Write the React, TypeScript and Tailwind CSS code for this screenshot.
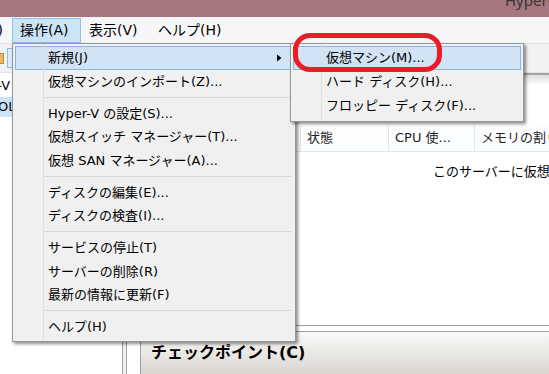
import React from "react";

const FONT = "font-['DejaVu_Sans','Noto_Sans_CJK_JP',sans-serif]";

type Item = { t: string; hl?: boolean; sub?: boolean } | "sep";

const mainItems: Item[] = [
  { t: "新規(J)", hl: true, sub: true },
  { t: "仮想マシンのインポート(Z)..." },
  "sep",
  { t: "Hyper-V の設定(S)..." },
  { t: "仮想スイッチ マネージャー(T)..." },
  { t: "仮想 SAN マネージャー(A)..." },
  "sep",
  { t: "ディスクの編集(E)..." },
  { t: "ディスクの検査(I)..." },
  "sep",
  { t: "サービスの停止(T)" },
  { t: "サーバーの削除(R)" },
  { t: "最新の情報に更新(F)" },
  "sep",
  { t: "ヘルプ(H)" },
];

const subItems = [
  { t: "仮想マシン(M)...", hl: true },
  { t: "ハード ディスク(H)..." },
  { t: "フロッピー ディスク(F)..." },
];

function Arrow() {
  return (
    <svg width="5" height="8" viewBox="0 0 5 8" className="ml-auto mr-[10px]">
      <path d="M0 0.5 L4.5 4 L0 7.5 Z" fill="#000" />
    </svg>
  );
}

export default function App() {
  return (
    <div className={`relative w-[549px] h-[374px] overflow-hidden bg-white text-[13px] text-black ${FONT}`}>
      {/* title bar */}
      <div className="h-[17px] bg-[#a5767d] overflow-hidden">
        <div className="pl-[505px] mt-[-7px] whitespace-nowrap text-[15px] leading-[15px] text-[#353535] font-['Noto_Sans','Noto_Sans_CJK_JP',sans-serif]">
          Hyper-V マネージャー
        </div>
      </div>

      {/* menu bar */}
      <div className="h-[27px] bg-[#f5f6f7] border-b border-[#e3e4e6] flex items-start pt-[1px] text-[14px]">
        <div className="w-[12px] shrink-0 h-[25px] overflow-hidden flex justify-end items-center">
          <span className="whitespace-nowrap pr-[9px]">ファイル(F)</span>
        </div>
        <div className="w-[69px] shrink-0 h-[25px] border border-[#90c0ec] bg-[#cde4f7] pl-[7px] flex items-center whitespace-nowrap">
          操作(A)
        </div>
        <div className="w-[69px] shrink-0 h-[25px] pl-[8px] flex items-center whitespace-nowrap">表示(V)</div>
        <div className="h-[25px] pl-[8px] flex items-center whitespace-nowrap">ヘルプ(H)</div>
      </div>

      {/* toolbar */}
      <div className="h-[29px] bg-[#f2f2f2] border-b border-[#e2e2e2] flex items-center">
        <div className="w-[4px] h-[11px] bg-[#e3b866] border-y border-r border-[#b98a3a]" />
        <div className="ml-[3px] w-[6px] h-[20px] bg-[#dcebf9] border-l border-y border-[#8fb8e8]" />
      </div>

      {/* body */}
      <div className="flex h-[302px]">
        {/* left tree pane */}
        <div className="w-[123px] shrink-0 border-r border-[#a0a0a0] bg-white pt-[2px] overflow-hidden">
          <div className="h-[22px] flex items-center whitespace-nowrap ml-[-41px]">Hyper-V マネージャー</div>
          <div className="h-[20px] w-[12px] bg-[#cce4f7] flex items-center whitespace-nowrap">
            <span className="ml-[-11px]">COLOSSUS</span>
          </div>
        </div>
        <div className="w-[3px] shrink-0 bg-[#f0f0f0]" />
        {/* center pane */}
        <div className="flex-1 min-w-0 border-l border-[#a0a0a0] pl-[13px] flex flex-col">
          <div className="h-[52px] shrink-0 border-t-2 border-[#a3a3a3] bg-gradient-to-b from-[#dcdcdc] via-white via-[20%] to-white" />
          {/* list header */}
          <div className="h-[27px] shrink-0 flex border-b border-[#e3e8ef] bg-[#fcfdfe] text-[#1e1e1e]">
            <div className="w-[161px] shrink-0 border-r border-[#e3e8ef]" />
            <div className="w-[88px] shrink-0 border-r border-[#e3e8ef] pl-[6px] flex items-center whitespace-nowrap">状態</div>
            <div className="w-[86px] shrink-0 border-r border-[#e3e8ef] pl-[6px] flex items-center whitespace-nowrap">CPU 使...</div>
            <div className="flex-1 min-w-0 pl-[6px] flex items-center whitespace-nowrap overflow-hidden">メモリの割り当て</div>
          </div>
          {/* list body */}
          <div className="h-[174px] shrink-0 border-b border-[#a0a0a0] pt-[12px] pl-[293px] leading-[16px] whitespace-nowrap overflow-hidden">
            このサーバーに仮想マシンが見つかりませんでした。
          </div>
          <div className="h-[5px] shrink-0" />
          {/* checkpoint bar */}
          <div className="flex-1 border-t border-l border-[#a0a0a0] bg-gradient-to-b from-[#fafafa] to-[#d8d5cf] pl-[10px] pt-[11px] leading-[20px] text-[16px] font-bold whitespace-nowrap">
            チェックポイント(C)
          </div>
        </div>
      </div>

      {/* main dropdown menu */}
      <div className="absolute left-[12px] top-[43px] w-[284px] border border-[#979797] bg-[#f0f0f0] p-[2px] shadow-[2px_2px_3px_rgba(0,0,0,0.45)]">
        {mainItems.map((it, i) =>
          it === "sep" ? (
            <div key={i} className="h-[8.5px] flex items-center">
              <div className="ml-[29px] mr-[1px] flex-1 h-px bg-[#d7d7d7]" />
            </div>
          ) : (
            <div
              key={i}
              className={`h-[23.5px] flex items-center border pl-[32px] whitespace-nowrap ${
                it.hl ? "border-[#84b6e8] bg-[#d1e3f5]" : "border-transparent"
              }`}
            >
              {it.t}
              {it.sub && <Arrow />}
            </div>
          )
        )}
        <div className="absolute left-[30px] top-0 bottom-0 w-px bg-[#dedfe0]" />
      </div>

      {/* sub menu */}
      <div className="absolute left-[290px] top-[43px] w-[234px] border border-[#979797] bg-[#f0f0f0] pt-[2px] px-[2px] pb-[3px] shadow-[2px_2px_3px_rgba(0,0,0,0.45)]">
        {subItems.map((it, i) => (
          <div
            key={i}
            className={`h-[24px] flex items-center border pl-[32px] whitespace-nowrap ${
              it.hl ? "border-[#84b6e8] bg-[#d1e3f5]" : "border-transparent"
            }`}
          >
            {it.t}
          </div>
        ))}
        <div className="absolute left-[30px] top-0 bottom-0 w-px bg-[#dedfe0]" />
      </div>

      {/* red annotation */}
      <div className="absolute left-[293px] top-[33px] w-[149px] h-[39px] border-[5px] border-[#ed1c24] rounded-[17px]" />
    </div>
  );
}
